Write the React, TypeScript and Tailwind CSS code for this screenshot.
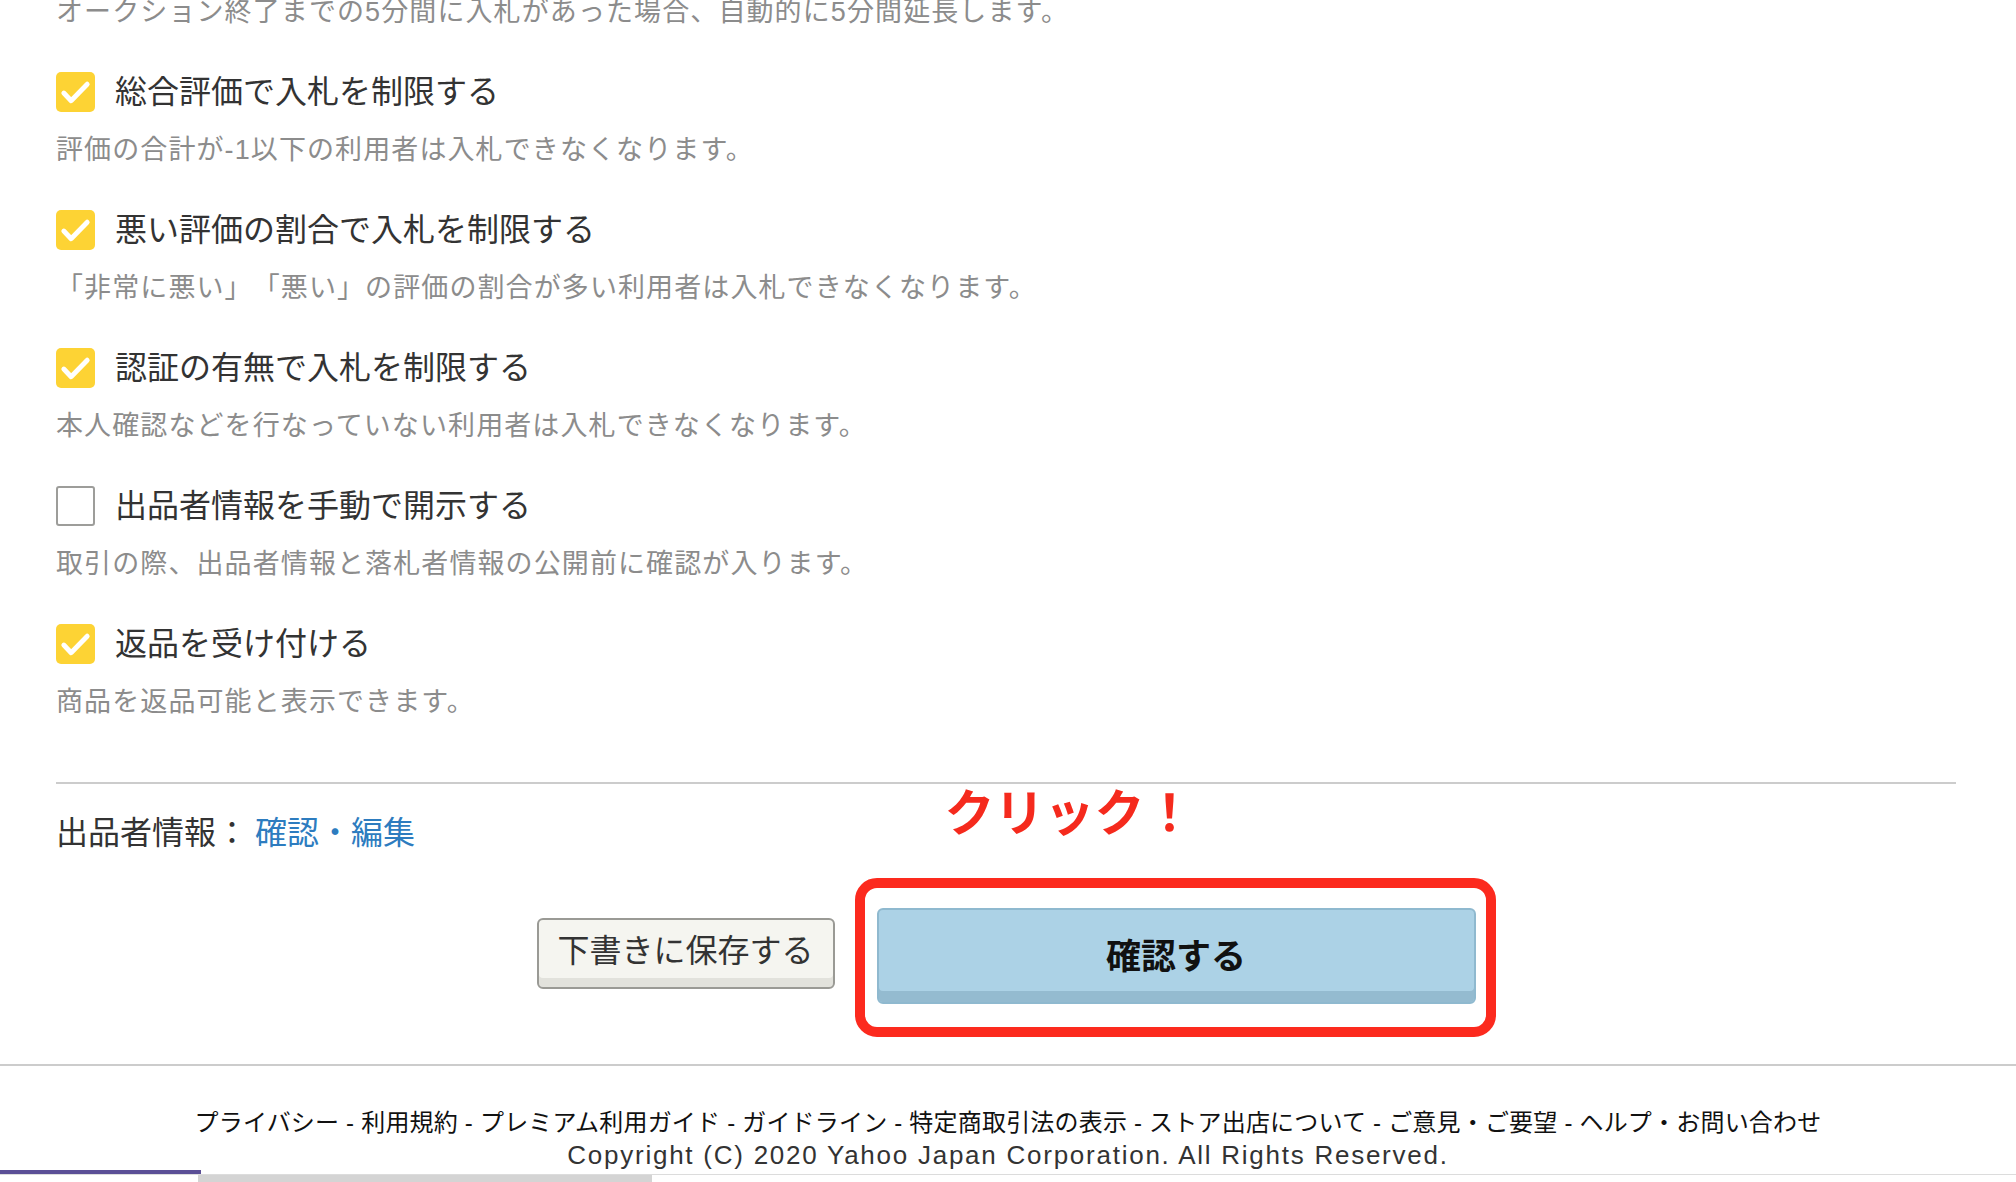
import React from "react";

const font = { fontFamily: '"Liberation Sans", "Noto Sans CJK JP", sans-serif' };

interface OptionItem {
  label: string;
  note: string;
  checked: boolean;
}

const options: OptionItem[] = [
  { label: "総合評価で入札を制限する", note: "評価の合計が-1以下の利用者は入札できなくなります。", checked: true },
  { label: "悪い評価の割合で入札を制限する", note: "「非常に悪い」「悪い」の評価の割合が多い利用者は入札できなくなります。", checked: true },
  { label: "認証の有無で入札を制限する", note: "本人確認などを行なっていない利用者は入札できなくなります。", checked: true },
  { label: "出品者情報を手動で開示する", note: "取引の際、出品者情報と落札者情報の公開前に確認が入ります。", checked: false },
  { label: "返品を受け付ける", note: "商品を返品可能と表示できます。", checked: true },
];

const footerLinks = [
  "プライバシー",
  "利用規約",
  "プレミアム利用ガイド",
  "ガイドライン",
  "特定商取引法の表示",
  "ストア出店について",
  "ご意見・ご要望",
  "ヘルプ・お問い合わせ",
];

const CheckBox: React.FC<{ checked: boolean }> = ({ checked }) =>
  checked ? (
    <span className="flex h-[40px] w-[39px] shrink-0 items-center justify-center rounded-[5px] bg-[#fdd334]">
      <svg viewBox="0 0 40 40" className="h-[40px] w-[39px]">
        <polyline points="8,21 15.5,29 32,12" fill="none" stroke="#fff" strokeWidth="5" strokeLinecap="round" strokeLinejoin="round" />
      </svg>
    </span>
  ) : (
    <span className="h-[40px] w-[39px] shrink-0 rounded-[3px] border-2 border-[#9d9d9a] bg-white" />
  );

export default function App() {
  return (
    <div className="h-[1182px] w-full overflow-hidden bg-white [text-spacing-trim:space-all]" style={font}>
      <div className="pl-[56px] pr-[60px]">
        <p className="-mt-[8px] mb-[40px] text-[27px] leading-[40px] tracking-[1.1px] text-[#8c8c8c]">
          オークション終了までの5分間に入札があった場合、自動的に5分間延長します。
        </p>

        <div className="flex flex-col gap-[42px]">
          {options.map((o) => (
            <div key={o.label} className="flex flex-col">
              <label className="flex h-[40px] items-center gap-[20px]">
                <CheckBox checked={o.checked} />
                <span className="text-[32px] leading-[40px] text-[#333]">{o.label}</span>
              </label>
              <p className="mt-[18px] -mb-[2px] text-[27px] leading-[40px] tracking-[1.1px] text-[#8c8c8c]">{o.note}</p>
            </div>
          ))}
        </div>

        <div className="mt-[62px] h-[2px] bg-[#cccccc]" />

        <p className="mt-[25px] text-[32px] leading-[48px] text-[#333]">
          出品者情報：<a className="ml-[7px] text-[#2d7cbf]">確認・編集</a>
        </p>

        <div className="mt-[51px] flex items-start justify-center gap-[42px]">
          <button className="mt-[10px] h-[71px] w-[298px] rounded-[6px] border-2 border-[#9a9a95] bg-[#f5f5f0] pb-[6px] text-[32px] leading-none text-[#333] shadow-[inset_0_-9px_0_#e2e2dc]">
            下書きに保存する
          </button>
          <div className="relative">
            <div className="pointer-events-none absolute -top-[119px] left-[68px] whitespace-nowrap text-[50px] font-bold leading-[50px] text-[#f52a1d]">
              クリック！
            </div>
            <div className="pointer-events-none absolute -bottom-[33px] -left-[22px] -right-[20px] -top-[30px] rounded-[22px] border-[10px] border-[#fc2a1e]" />
            <button className="h-[96px] w-[599px] rounded-[6px] border-2 border-[#8fb9cf] bg-[#acd2e6] text-[35px] font-bold leading-none text-[#111] shadow-[inset_0_-11px_0_#94bbd0]">
              確認する
            </button>
          </div>
        </div>
      </div>

      <footer className="mt-[60px] border-t-2 border-[#cccccc] pt-[40px] text-center">
        <p className="text-[24px] leading-[34px] tracking-[0.2px] text-[#111]">
          {footerLinks.map((l, i) => (
            <span key={l}>
              {i > 0 && " - "}
              <a>{l}</a>
            </span>
          ))}
        </p>
        <p className="text-[26px] leading-[30px] tracking-[1.75px] text-[#333]">
          Copyright (C) 2020 Yahoo Japan Corporation. All Rights Reserved.
        </p>
      </footer>

      <div className="border-b border-[#dcdcdc]">
        <div className="h-[4px] w-[201px] bg-[#5b4f96]" />
      </div>
      <div className="ml-[198px] h-[7px] w-[454px] bg-[#d4d4d4]" />
    </div>
  );
}
